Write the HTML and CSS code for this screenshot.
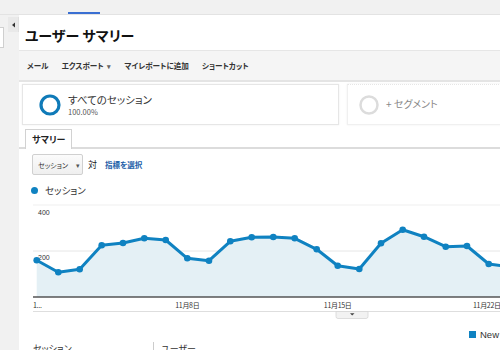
FILE: index.html
```html
<!DOCTYPE html>
<html lang="ja">
<head>
<meta charset="utf-8">
<link rel="stylesheet" href="styles.css">
</head>
<body>
<div class="topbar"><span class="top-indicator"></span></div>
<div class="page">
  <aside class="sidebar">
    <div class="side-input"></div>
    <div class="collapse"><svg width="5" height="6" viewBox="0 0 5 6"><path d="M4 0.5 L1 3 L4 5.5 Z" fill="#333"/></svg></div>
  </aside>
  <main class="main">
    <div class="title-bar"><h1 class="title">ユーザー サマリー</h1></div>
    <nav class="toolbar">
      <span class="tool">メール</span>
      <span class="tool">エクスポート <span class="caret">▾</span></span>
      <span class="tool">マイレポートに追加</span>
      <span class="tool">ショートカット</span>
    </nav>
    <section class="segments">
      <div class="seg-card seg-active">
        <svg class="ring" width="24" height="24" viewBox="0 0 24 24"><circle cx="12" cy="12" r="9" fill="none" stroke="#0f7ab8" stroke-width="3.2"/></svg>
        <div class="seg-text">
          <div class="seg-name">すべてのセッション</div>
          <div class="seg-pct">100.00%</div>
        </div>
      </div>
      <div class="seg-card seg-add">
        <svg class="ring" width="22" height="22" viewBox="0 0 22 22"><circle cx="11" cy="11" r="8.5" fill="none" stroke="#dcdcdc" stroke-width="2.5"/></svg>
        <span class="seg-add-text">+ セグメント</span>
      </div>
    </section>
    <div class="tabs"><span class="tab">サマリー</span></div>
    <div class="controls">
      <span class="dropdown">セッション <span class="dd-caret">▾</span></span>
      <span class="vs">対</span>
      <span class="pick">指標を選択</span>
    </div>
    <div class="legend"><span class="dot"></span><span class="legend-text">セッション</span></div>
    <svg class="chart" width="481" height="124" viewBox="19 198 481 124">
      <line x1="33" y1="205" x2="500" y2="205" stroke="#efefef" stroke-width="1"/>
      <line x1="33" y1="251" x2="500" y2="251" stroke="#e6e6e6" stroke-width="1"/>
      <polygon fill="#e4f0f5" points="36.7,260.3 58.3,272.3 79.7,269.3 101.7,245.3 123,243 144.3,238.3 165.7,240 187.3,258.3 209,260.7 230.3,241.3 251.7,237.3 273.3,237 294.7,238.3 316.7,249.3 337.7,265.7 359.3,269 381,243.3 402.7,229.7 424,236.7 445.7,246.7 467,246 488.7,264 510,267 510,297 36.7,297"/>
      <text x="38" y="215" class="axis">400</text>
      <text x="38" y="260" class="axis">200</text>
      <polyline fill="none" stroke="#0f82c1" stroke-width="3" stroke-linejoin="round" points="36.7,260.3 58.3,272.3 79.7,269.3 101.7,245.3 123,243 144.3,238.3 165.7,240 187.3,258.3 209,260.7 230.3,241.3 251.7,237.3 273.3,237 294.7,238.3 316.7,249.3 337.7,265.7 359.3,269 381,243.3 402.7,229.7 424,236.7 445.7,246.7 467,246 488.7,264 510,267"/>
      <g fill="#0f82c1">
        <circle cx="36.7" cy="260.3" r="3.3"/><circle cx="58.3" cy="272.3" r="3.3"/><circle cx="79.7" cy="269.3" r="3.3"/><circle cx="101.7" cy="245.3" r="3.3"/><circle cx="123" cy="243" r="3.3"/><circle cx="144.3" cy="238.3" r="3.3"/><circle cx="165.7" cy="240" r="3.3"/><circle cx="187.3" cy="258.3" r="3.3"/><circle cx="209" cy="260.7" r="3.3"/><circle cx="230.3" cy="241.3" r="3.3"/><circle cx="251.7" cy="237.3" r="3.3"/><circle cx="273.3" cy="237" r="3.3"/><circle cx="294.7" cy="238.3" r="3.3"/><circle cx="316.7" cy="249.3" r="3.3"/><circle cx="337.7" cy="265.7" r="3.3"/><circle cx="359.3" cy="269" r="3.3"/><circle cx="381" cy="243.3" r="3.3"/><circle cx="402.7" cy="229.7" r="3.3"/><circle cx="424" cy="236.7" r="3.3"/><circle cx="445.7" cy="246.7" r="3.3"/><circle cx="467" cy="246" r="3.3"/><circle cx="488.7" cy="264" r="3.3"/>
      </g>
      <line x1="33" y1="297" x2="500" y2="297" stroke="#555" stroke-width="1.6"/>
      <text x="33" y="308" class="xlab">1...</text>
      <text x="187.3" y="308" class="xlab" text-anchor="middle">11月8日</text>
      <text x="337.7" y="308" class="xlab" text-anchor="middle">11月15日</text>
      <text x="473" y="308" class="xlab">11月22日</text>
      <line x1="33" y1="311.5" x2="500" y2="311.5" stroke="#dedede" stroke-width="1"/>
      <path d="M336 311.5 L336 316.5 Q336 318.5 338 318.5 L366 318.5 Q368 318.5 368 316.5 L368 311.5 Z" fill="#f2f2f2" stroke="#d6d6d6" stroke-width="0.8"/>
      <path d="M350 313.3 L354.5 313.3 L352.2 315.5 Z" fill="#444"/>
    </svg>
    <div class="bottom">
      <div class="key"><span class="key-sq"></span><span class="key-text">New Visitor</span></div>
      <div class="metrics">
        <span class="metric">セッション</span>
        <span class="metric metric-sep">ユーザー</span>
      </div>
    </div>
  </main>
</div>
</body>
</html>
```

FILE: styles.css
```css
html, body {
  margin: 0;
  padding: 0;
}
body {
  width: 500px;
  height: 350px;
  overflow: hidden;
  background: #f1f1f1;
  font-family: "Noto Sans CJK JP", "Noto Sans", "Liberation Sans", sans-serif;
  font-feature-settings: "palt";
  color: #222;
}
.topbar {
  height: 14px;
  border-bottom: 1px solid #e3e3e3;
  background: #f1f1f1;
  display: flex;
  align-items: flex-end;
}
.top-indicator {
  display: block;
  width: 32px;
  height: 2px;
  margin-left: 68px;
  background: #3a6fd2;
}
.page {
  display: flex;
  height: 335px;
}
.sidebar {
  width: 19px;
  flex: none;
  position: relative;
  background: #f1f1f1;
}
.side-input {
  position: absolute;
  left: -2px;
  top: 12px;
  width: 4px;
  height: 19px;
  background: #fff;
  border: 1px solid #cfcfcf;
}
.collapse {
  position: absolute;
  left: 8px;
  top: 2px;
  width: 10px;
  height: 15px;
  background: #e9e9e9;
  border-right: 1px solid #e0e0e0;
  display: flex;
  align-items: center;
  justify-content: center;
}
.main {
  flex: 1;
  background: #fff;
  overflow: hidden;
  white-space: nowrap;
}
.title-bar {
  height: 35px;
  display: flex;
  align-items: center;
  padding-left: 6px;
  padding-top: 5px;
  box-sizing: border-box;
}
.title {
  margin: 0;
  font-size: 14px;
  font-weight: 700;
  color: #111;
  letter-spacing: 0;
}
.toolbar {
  height: 29px;
  border-top: 1px solid #e6e6e6;
  border-bottom: 2px solid #e4e4e4;
  background: #f5f5f5;
  display: flex;
  align-items: center;
  padding-left: 8px;
  gap: 13px;
  font-size: 7.6px;
  font-weight: 700;
  color: #333;
}
.caret {
  font-size: 7px;
  color: #666;
  margin-left: 2px;
}
.segments {
  height: 46px;
  box-sizing: border-box;
  padding: 2px 0 0 3px;
  display: flex;
  gap: 8px;
  background: #fff;
}
.seg-card {
  height: 41px;
  box-sizing: border-box;
  border: 1px solid #e6e6e6;
  box-shadow: 0 0 2px #eee;
  display: flex;
  align-items: center;
  background: #fff;
  flex: none;
}
.seg-active {
  width: 317px;
  padding-left: 15px;
}
.seg-add {
  width: 200px;
  padding-left: 10px;
  border-color: #f0f0f0;
  border-top: 1px dotted #e6e6e6;
}
.ring {
  display: block;
  flex: none;
}
.seg-text {
  margin-left: 6px;
  display: flex;
  flex-direction: column;
  margin-top: 0px;
}
.seg-name {
  font-size: 10.5px;
  color: #333;
  line-height: 15px;
}
.seg-pct {
  font-size: 7.5px;
  color: #555;
  line-height: 10px;
}
.seg-add-text {
  margin-left: 6px;
  margin-top: -3px;
  font-size: 10px;
  color: #888;
}
.tabs {
  height: 21px;
  box-sizing: border-box;
  border-bottom: 2px solid #dcdcdc;
  padding-left: 6px;
  display: flex;
  align-items: flex-end;
}
.tab {
  height: 20px;
  box-sizing: border-box;
  margin-bottom: -2px;
  padding: 0 6px;
  border: 1px solid #d2d2d2;
  border-bottom: none;
  background: #fff;
  font-size: 9px;
  font-weight: 700;
  color: #222;
  display: flex;
  align-items: center;
}
.controls {
  height: 29px;
  box-sizing: border-box;
  padding: 5px 0 0 13px;
  display: flex;
  align-items: flex-start;
}
.dropdown {
  width: 51px;
  height: 21px;
  box-sizing: border-box;
  border: 1px solid #d0d0d0;
  border-radius: 2px;
  background: linear-gradient(#fbfbfb, #efefef);
  font-size: 7px;
  color: #333;
  display: flex;
  align-items: center;
  padding-left: 5px;
}
.dd-caret {
  margin-left: 8px;
  font-size: 7px;
  color: #555;
}
.vs {
  margin-left: 5px;
  font-size: 9px;
  line-height: 21px;
  color: #222;
}
.pick {
  margin-left: 8px;
  font-size: 7.5px;
  font-weight: 700;
  line-height: 21px;
  color: #1c5ea8;
}
.legend {
  height: 20px;
  display: flex;
  align-items: center;
  padding-left: 12px;
  padding-top: 4px;
  box-sizing: border-box;
}
.dot {
  width: 7px;
  height: 7px;
  border-radius: 50%;
  background: #0f82c1;
  flex: none;
}
.legend-text {
  margin-left: 7px;
  font-size: 9.5px;
  color: #333;
}
.chart {
  display: block;
}
.axis {
  font-family: "Liberation Sans", sans-serif;
  font-size: 7px;
  fill: #333;
}
.xlab {
  font-family: "Noto Sans CJK JP", sans-serif;
  font-size: 7px;
  fill: #333;
  letter-spacing: -0.3px;
}
.bottom {
  height: 28px;
}
.key {
  display: flex;
  align-items: center;
  padding-left: 450px;
  height: 20px;
  padding-top: 4px;
  box-sizing: border-box;
}
.key-sq {
  width: 7px;
  height: 7px;
  background: #0f82c1;
  flex: none;
}
.key-text {
  margin-left: 4px;
  font-family: "Liberation Sans", sans-serif;
  font-size: 9.5px;
  color: #333;
}
.metrics {
  display: flex;
  padding-left: 14px;
  padding-top: 0px;
}
.metric {
  font-size: 9px;
  color: #333;
  width: 120px;
  line-height: 14px;
}
.metric-sep {
  border-left: 1px solid #ccc;
  padding-left: 7px;
}
```
